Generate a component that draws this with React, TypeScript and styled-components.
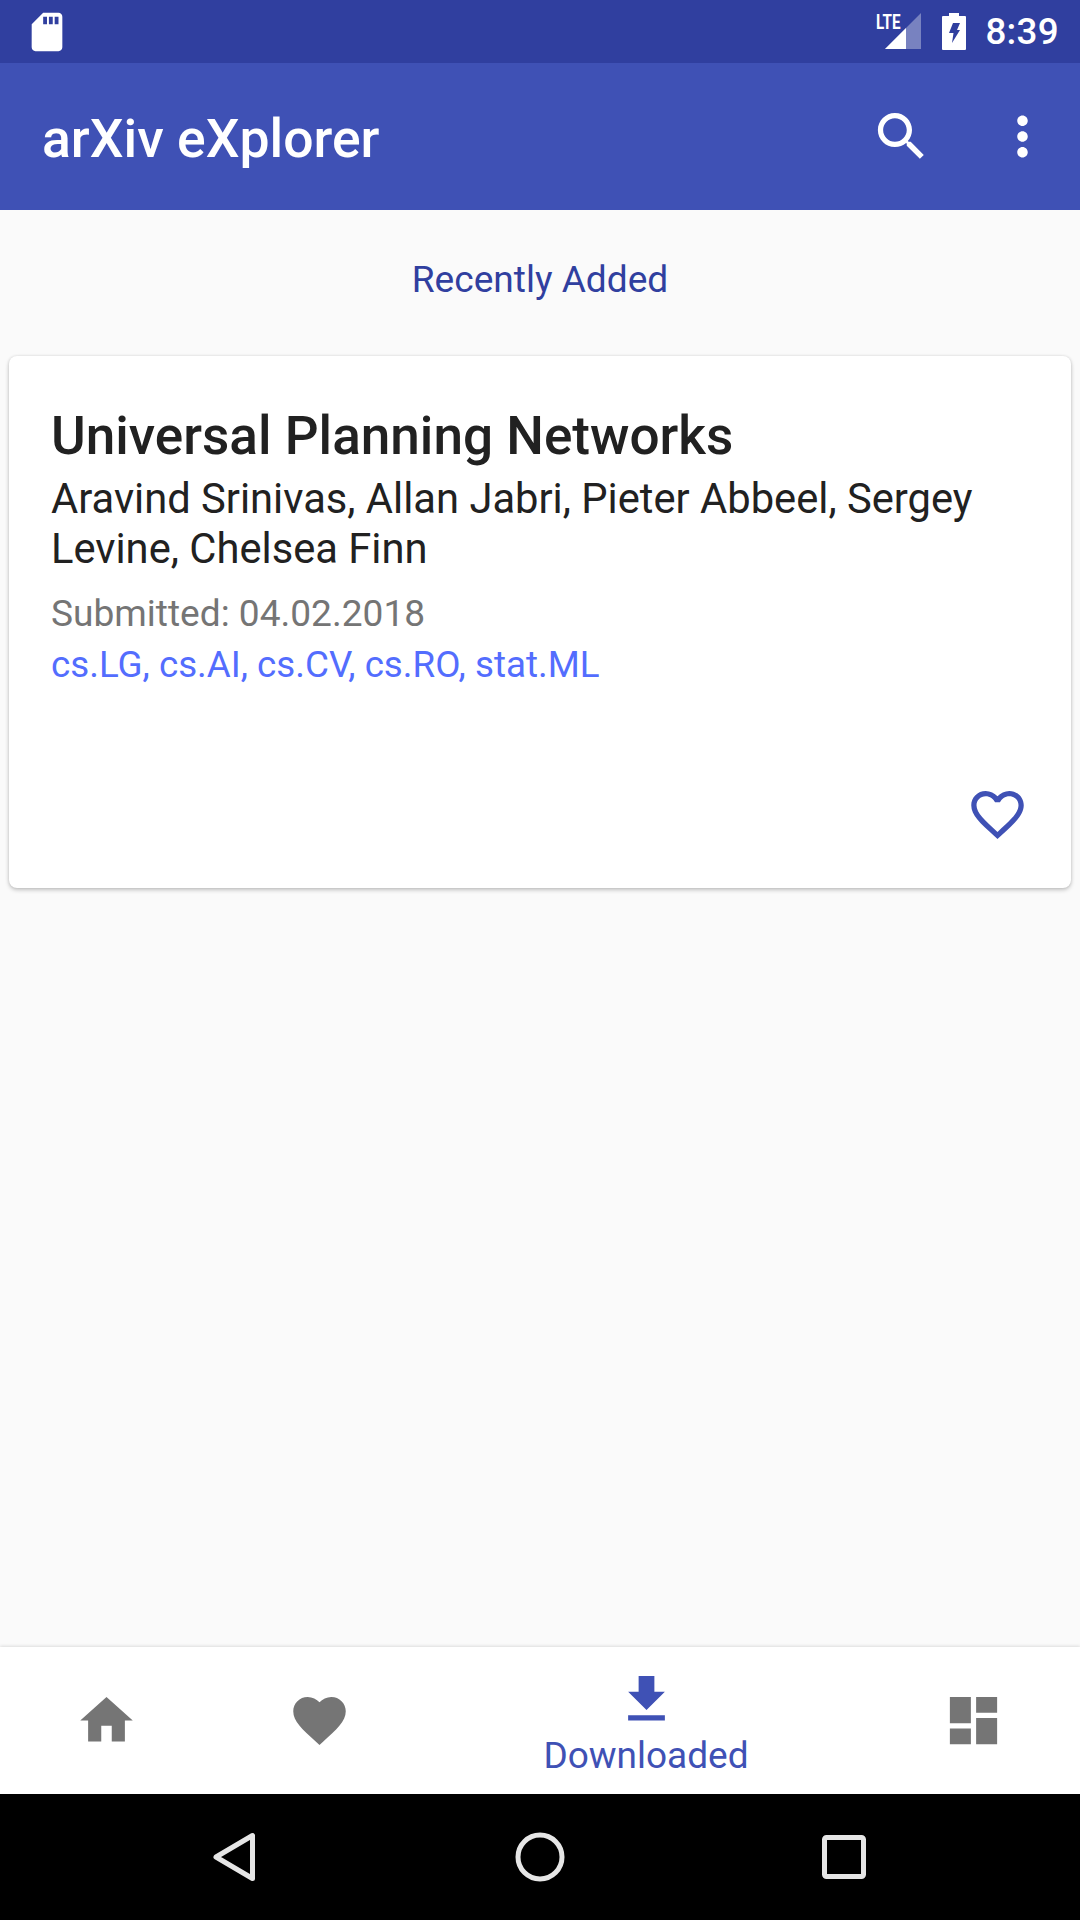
import styled, { createGlobalStyle } from "styled-components";

const GlobalStyle = createGlobalStyle`
  html, body {
    margin: 0;
    padding: 0;
    background: #fafafa;
    font-family: Roboto, "Noto Sans", sans-serif;
  }
`;

const Screen = styled.div`
  width: 1080px;
  height: 1920px;
  display: flex;
  flex-direction: column;
  overflow: hidden;
`;

const StatusBar = styled.div`
  height: 63px;
  flex: none;
  background: #303f9f;
  color: #fff;
  display: flex;
  align-items: center;
  padding: 0 21px 0 24px;
`;

const SdIcon = styled.svg`
  width: 46px;
  height: 46px;
  fill: #fff;
`;

const StatusRight = styled.div`
  margin-left: auto;
  display: flex;
  align-items: center;
`;

const Signal = styled.div`
  position: relative;
  width: 45px;
  height: 37px;
  margin-top: -1px;
`;

const SignalGlyph = styled.svg`
  display: block;
  width: 45px;
  height: 37px;
`;

const LteLabel = styled.span`
  position: absolute;
  left: 0;
  top: -1px;
  font-size: 20px;
  line-height: 20px;
  font-weight: 700;
  color: #fff;
  display: inline-block;
  transform: scaleX(0.76);
  transform-origin: left center;
`;

const BatteryIcon = styled.svg`
  display: block;
  width: 24px;
  height: 37px;
  margin: -1px 19px 0 21px;
  fill: #fff;
`;

const Clock = styled.span`
  font-size: 36.75px;
  font-weight: 500;
  line-height: 42px;
  letter-spacing: 0.3px;
`;

const AppBar = styled.header`
  height: 147px;
  flex: none;
  background: #3f51b5;
  display: flex;
  align-items: center;
  padding: 0 26px 0 42px;
`;

const AppTitle = styled.h1`
  margin: 4px 0 0;
  font-size: 53.5px;
  line-height: 60px;
  font-weight: 500;
  color: #fff;
`;

const AppActions = styled.div`
  margin-left: auto;
  display: flex;
  gap: 58px;
`;

const ActionIcon = styled.svg`
  display: block;
  width: 63px;
  height: 63px;
  fill: #fff;
`;

const Content = styled.main`
  flex: 1;
  background: #fafafa;
  display: flex;
  flex-direction: column;
`;

const SectionLabel = styled.div`
  height: 146px;
  display: flex;
  align-items: center;
  justify-content: center;
  padding-bottom: 8px;
  box-sizing: border-box;
  font-size: 37.1px;
  color: #303f9f;
`;

const Card = styled.article`
  margin: 0 9px;
  height: 532px;
  box-sizing: border-box;
  padding: 47px 42px 42px 42px;
  background: #fff;
  border-radius: 8px;
  box-shadow: 0 2px 4px rgba(0, 0, 0, 0.22), 0 0 3px rgba(0, 0, 0, 0.1);
  display: flex;
  flex-direction: column;
`;

const PaperTitle = styled.h2`
  margin: 0;
  font-size: 53.1px;
  line-height: 66px;
  font-weight: 500;
  color: #212121;
`;

const Authors = styled.div`
  font-size: 41.7px;
  line-height: 50px;
  color: #212121;
  margin-top: 5px;
`;

const Submitted = styled.div`
  font-size: 37.1px;
  line-height: 44px;
  color: #757575;
  margin-top: 18px;
`;

const Tags = styled.div`
  font-size: 36.75px;
  line-height: 44px;
  color: #536dfe;
  margin-top: 7px;
`;

const FavIcon = styled.svg`
  display: block;
  width: 63px;
  height: 63px;
  margin-top: auto;
  margin-left: auto;
  fill: #3f51b5;
`;

const BottomNav = styled.nav`
  height: 147px;
  flex: none;
  background: #fff;
  box-shadow: 0 -1px 3px rgba(0, 0, 0, 0.12);
  display: grid;
  grid-template-columns: 213px 212px 442px 213px;
`;

const NavItem = styled.div<{ $active?: boolean }>`
  display: flex;
  flex-direction: column;
  align-items: center;
  justify-content: ${(p) => (p.$active ? "flex-start" : "center")};
  padding-top: ${(p) => (p.$active ? "21px" : "0")};
  color: ${(p) => (p.$active ? "#3f51b5" : "#757575")};
`;

const NavIcon = styled.svg`
  display: block;
  width: 63px;
  height: 63px;
  fill: currentColor;
`;

const NavLabel = styled.span`
  font-size: 37px;
  line-height: 44px;
  margin-top: 3px;
`;

const SystemBar = styled.div`
  height: 126px;
  flex: none;
  background: #000;
  display: flex;
  align-items: center;
  justify-content: center;
  gap: 220px;
`;

const SystemIcon = styled.svg`
  display: block;
  width: 84px;
  height: 84px;
  fill: none;
  stroke: #e6e6e6;
  stroke-width: 5;
  stroke-linejoin: round;
`;

export default function App() {
  return (
    <Screen>
      <GlobalStyle />
      <StatusBar>
        <SdIcon viewBox="0 0 24 24">
          <path d="M18 2h-8L4.02 8 4 20c0 1.1.9 2 2 2h12c1.1 0 2-.9 2-2V4c0-1.1-.9-2-2-2zm-6 6h-2V4h2v4zm3 0h-2V4h2v4zm3 0h-2V4h2v4z" />
        </SdIcon>
        <StatusRight>
          <Signal>
            <SignalGlyph viewBox="0 0 45 37">
              <path d="M45 0V36H9z" fill="#fff" fillOpacity="0.35" />
              <path d="M30 15V36H9z" fill="#fff" />
            </SignalGlyph>
            <LteLabel>LTE</LteLabel>
          </Signal>
          <BatteryIcon viewBox="0 0 24 37">
            <path
              fillRule="evenodd"
              d="M7 0h10v3h6a1 1 0 0 1 1 1v32a1 1 0 0 1-1 1H1a1 1 0 0 1-1-1V4a1 1 0 0 1 1-1h6zM11 10H18L15 17H18L10 30 11.5 20H7z"
            />
          </BatteryIcon>
          <Clock>8:39</Clock>
        </StatusRight>
      </StatusBar>

      <AppBar>
        <AppTitle>arXiv eXplorer</AppTitle>
        <AppActions>
          <ActionIcon viewBox="0 0 24 24">
            <path d="M15.5 14h-.79l-.28-.27C15.41 12.59 16 11.11 16 9.5 16 5.91 13.09 3 9.5 3S3 5.91 3 9.5 5.91 16 9.5 16c1.61 0 3.09-.59 4.23-1.57l.27.28v.79l5 4.99L20.49 19l-4.99-5zm-6 0C7.01 14 5 11.99 5 9.5S7.01 5 9.5 5 14 7.01 14 9.5 11.99 14 9.5 14z" />
          </ActionIcon>
          <ActionIcon viewBox="0 0 24 24">
            <path d="M12 8c1.1 0 2-.9 2-2s-.9-2-2-2-2 .9-2 2 .9 2 2 2zm0 2c-1.1 0-2 .9-2 2s.9 2 2 2 2-.9 2-2-.9-2-2-2zm0 6c-1.1 0-2 .9-2 2s.9 2 2 2 2-.9 2-2-.9-2-2-2z" />
          </ActionIcon>
        </AppActions>
      </AppBar>

      <Content>
        <SectionLabel>Recently Added</SectionLabel>
        <Card>
          <PaperTitle>Universal Planning Networks</PaperTitle>
          <Authors>Aravind Srinivas, Allan Jabri, Pieter Abbeel, Sergey Levine, Chelsea Finn</Authors>
          <Submitted>Submitted: 04.02.2018</Submitted>
          <Tags>cs.LG, cs.AI, cs.CV, cs.RO, stat.ML</Tags>
          <FavIcon viewBox="0 0 24 24">
            <path d="M16.5 3c-1.74 0-3.41.81-4.5 2.09C10.91 3.81 9.24 3 7.5 3 4.42 3 2 5.42 2 8.5c0 3.78 3.4 6.86 8.55 11.54L12 21.35l1.45-1.32C18.6 15.36 22 12.28 22 8.5 22 5.42 19.58 3 16.5 3zm-4.4 15.55l-.1.1-.1-.1C7.14 14.24 4 11.39 4 8.5 4 6.5 5.5 5 7.5 5c1.54 0 3.04.99 3.57 2.36h1.87C13.46 5.99 14.96 5 16.5 5c2 0 3.5 1.5 3.5 3.5 0 2.89-3.14 5.74-7.9 10.05z" />
          </FavIcon>
        </Card>
      </Content>

      <BottomNav>
        <NavItem>
          <NavIcon viewBox="0 0 24 24">
            <path d="M10 20v-6h4v6h5v-8h3L12 3 2 12h3v8z" />
          </NavIcon>
        </NavItem>
        <NavItem>
          <NavIcon viewBox="0 0 24 24">
            <path d="M12 21.35l-1.45-1.32C5.4 15.36 2 12.28 2 8.5 2 5.42 4.42 3 7.5 3c1.74 0 3.41.81 4.5 2.09C13.09 3.81 14.76 3 16.5 3 19.58 3 22 5.42 22 8.5c0 3.78-3.4 6.86-8.55 11.54L12 21.35z" />
          </NavIcon>
        </NavItem>
        <NavItem $active>
          <NavIcon viewBox="0 0 24 24">
            <path d="M19 9h-4V3H9v6H5l7 7 7-7zM5 18v2h14v-2H5z" />
          </NavIcon>
          <NavLabel>Downloaded</NavLabel>
        </NavItem>
        <NavItem>
          <NavIcon viewBox="0 0 24 24">
            <path d="M3 13h8V3H3v10zm0 8h8v-6H3v6zm10 0h8V11h-8v10zm0-18v6h8V3h-8z" />
          </NavIcon>
        </NavItem>
      </BottomNav>

      <SystemBar>
        <SystemIcon viewBox="0 0 84 84">
          <path d="M58.5 20.5V63.5L22 42z" />
        </SystemIcon>
        <SystemIcon viewBox="0 0 84 84">
          <circle cx="42" cy="42" r="22" />
        </SystemIcon>
        <SystemIcon viewBox="0 0 84 84">
          <rect x="22.5" y="22.5" width="39" height="39" rx="2" />
        </SystemIcon>
      </SystemBar>
    </Screen>
  );
}
